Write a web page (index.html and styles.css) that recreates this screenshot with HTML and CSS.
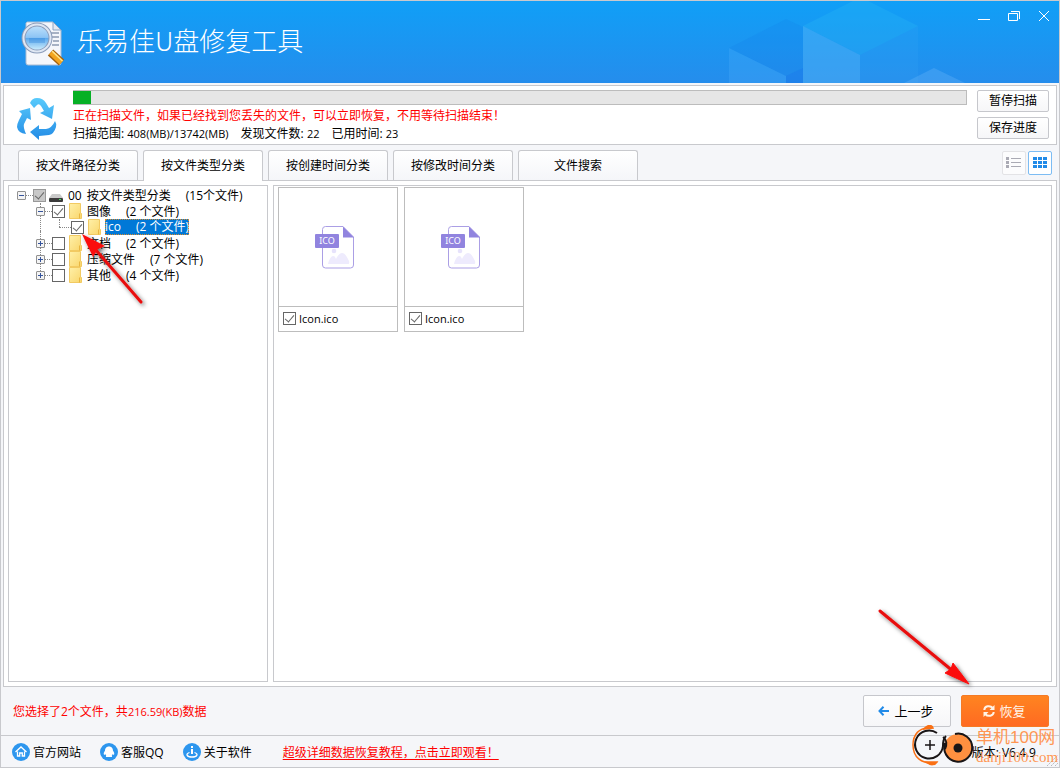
FILE: index.html
```
<!DOCTYPE html>
<html lang="zh-CN">
<head>
<meta charset="utf-8">
<title>乐易佳U盘修复工具</title>
<link rel="stylesheet" href="styles.css">
</head>
<body>
<svg class="defs" width="0" height="0" aria-hidden="true">
  <defs>
    <linearGradient id="folderFill" x1="0" y1="0" x2="1" y2="1"><stop offset="0" stop-color="#fff0a8"/><stop offset="1" stop-color="#f9d66c"/></linearGradient>
    <linearGradient id="blueFill" gradientUnits="userSpaceOnUse" x1="0" y1="0" x2="0" y2="42"><stop offset="0" stop-color="#5accfc"/><stop offset="1" stop-color="#248de6"/></linearGradient>
    <filter id="soft" x="-30%" y="-30%" width="160%" height="160%"><feDropShadow dx="2" dy="2" stdDeviation="2" flood-color="#000" flood-opacity=".55"/></filter>
  </defs>
  <symbol id="folder" viewBox="0 0 13 16"><path d="M.5.5h11v10h1v5H.5z" fill="url(#folderFill)" stroke="#f2ca62"/><path d="M10.500 10.500v5" stroke="#e9b640"/></symbol>
  <symbol id="ico-file" viewBox="0 0 40 43">
    <path d="M10.500.5H28L38.500 11v28a3 3 0 0 1-3 3h-25a3 3 0 0 1-3-3V3.500a3 3 0 0 1 3-3z" fill="#fff" stroke="#ab9fe5"/>
    <path d="M28 .5 39 11.500H28z" fill="#9184df"/>
    <circle cx="19" cy="25" r="2.300" fill="#e6e2fb"/>
    <path d="M13 38c1-4 3-8 5-8s2 1 3 3c2-4 4-6 6-6 3 0 5 4 7 8 .6 2 0 3-1 3z" fill="#eeebfd"/>
    <rect x="0" y="8" width="24" height="14" rx="1" fill="#9184df"/>
  </symbol>
</svg>
<div class="window">
  <header class="titlebar">
    <svg class="cubes" width="260" height="82" viewBox="0 0 260 82" aria-hidden="true">
      <path d="M0 47 57 18l17 8v41l-17 8z" fill="#1478e8" opacity=".16"/>
      <path d="M0 47l57 28v7H0z" fill="#4fb0fa" opacity=".28"/>
      <path d="M57 75l17-8v15H57z" fill="#1670e8" opacity=".4"/>
      <path d="M74 25 124 0h15l50 25-58 29z" fill="#2cbcf3" opacity=".28"/>
      <path d="M74 25l57 29v28H74z" fill="#5cbaf7" opacity=".4"/>
      <path d="M131 54l58-29v57h-58z" fill="#38a4f5" opacity=".2"/>
      <path d="M175 82l30-15 31 15z" fill="#6cb8f8" opacity=".32"/>
    </svg>
    <svg class="logo" width="46" height="46" viewBox="0 0 46 46" aria-hidden="true">
      <defs>
        <linearGradient id="lens" x1="0" y1="0" x2="0" y2="1"><stop offset="0" stop-color="#c5e4fb"/><stop offset=".48" stop-color="#8cc4f5"/><stop offset=".5" stop-color="#5aa8ec"/><stop offset="1" stop-color="#dcf6ff"/></linearGradient>
      </defs>
      <path d="M6 1h26l8 8v33a2 2 0 0 1-2 2H7a2 2 0 0 1-2-2V2z" fill="#f4f6fb" stroke="#a9bbd2"/>
      <path d="M32 1v8h8z" fill="#e3e9f2" stroke="#8da5c4"/>
      <path d="M29 12h9M31 16h7M32 20h6M31 24h7" stroke="#8c9bb2" stroke-width="1.500"/>
      <circle cx="16" cy="17" r="13.500" fill="url(#lens)" stroke="#8b9cba" stroke-width="4"/>
      <circle cx="16" cy="17" r="13.500" fill="none" stroke="#dfe7f3" stroke-width="2"/>
      <path d="M8 17h16v5H8z" fill="#287fd6" opacity=".3"/>
      <path d="M29.500 31.500l11 10" stroke="#a3600c" stroke-width="8"/>
      <path d="M30 31.500l10.500 10" stroke="#f3a51f" stroke-width="5.500"/>
      <path d="M31 30l10.500 10" stroke="#ffe58a" stroke-width="1.500"/>
    </svg>
    <h1 class="title">乐易佳U盘修复工具</h1>
    <div class="controls">
      <button class="control" type="button" aria-label="最小化"><svg width="14" height="14" viewBox="0 0 14 14"><path d="M1 10.500h12" stroke="#fff"/></svg></button>
      <button class="control" type="button" aria-label="还原"><svg width="14" height="14" viewBox="0 0 14 14" fill="none" stroke="#fff"><path d="M1.500 4.500h9v7h-9z"/><path d="M4 2.500h8.500V10"/></svg></button>
      <button class="control" type="button" aria-label="关闭"><svg width="14" height="14" viewBox="0 0 14 14"><path d="M2 2l10 10M12 2 2 12" stroke="#fff"/></svg></button>
    </div>
  </header>

  <section class="scan">
    <svg class="recycle" width="40" height="44" viewBox="0 0 40 44" fill="url(#blueFill)" aria-hidden="true">
      <path d="M13 6Q15 1 20 1q6 0 9 5l3 5 5-3-2 14-12-6 4-2-3-5q-2-3-4-1l-3 3z"/>
      <path d="M2 14l11-3 1 12-4-2-3 6q-1 3 2 10-8-1-9-7 0-3 2-7l3-6z"/>
      <path d="M13 35l9-7v4h7q6-1 9-8 2 3 1 6-2 7-7 8l-10 1v4z"/>
    </svg>
    <div class="scan-info">
      <div class="progress" role="progressbar" aria-label="扫描进度" aria-valuenow="2" aria-valuemin="0" aria-valuemax="100"><div class="progress-fill" style="width:2%"></div></div>
      <p class="alert">正在扫描文件，如果已经找到您丢失的文件，可以立即恢复，不用等待扫描结束！</p>
      <p class="stats"><span>扫描范围: <small>408(MB)/13742(MB)</small></span><span>发现文件数: <small>22</small></span><span>已用时间: <small>23</small></span></p>
    </div>
    <div class="scan-actions">
      <button class="button" type="button">暂停扫描</button>
      <button class="button" type="button">保存进度</button>
    </div>
  </section>

  <nav class="toolbar">
    <div class="tabs">
      <button class="tab" type="button">按文件路径分类</button>
      <button class="tab active" type="button">按文件类型分类</button>
      <button class="tab" type="button">按创建时间分类</button>
      <button class="tab" type="button">按修改时间分类</button>
      <button class="tab" type="button">文件搜索</button>
    </div>
    <div class="views">
      <button class="view" type="button" aria-label="列表"><svg width="16" height="12" viewBox="0 0 16 12" fill="#aaaab4"><path d="M0 0h3v3H0zM0 4h3v3H0zM0 8h3v3H0zM5 1h10v1H5zM5 5h10v1H5zM5 9h10v1H5z"/></svg></button>
      <button class="view selected" type="button" aria-label="缩略图"><svg width="14" height="12" viewBox="0 0 14 12" fill="#218be8"><path d="M0 0h4v3H0zM5 0h4v3H5zM10 0h4v3h-4zM0 4h4v3H0zM5 4h4v3H5zM10 4h4v3h-4zM0 8h4v3H0zM5 8h4v3H5zM10 8h4v3h-4z"/></svg></button>
    </div>
  </nav>

  <main class="main">
    <section class="tree-box">
      <ul class="tree">
        <li class="node">
          <div class="row"><button class="expander open" type="button" aria-label="折叠"></button><span class="dots"></span><input class="check mixed" type="checkbox" id="n0" checked>
            <svg class="drive" width="14" height="8" viewBox="0 0 14 8"><path d="M3 0h8l3 4H0z" fill="#c9c9c9"/><rect y="4" width="14" height="4" rx="1" fill="#3b3b3b"/><path d="M10 5h2v1h-2z" fill="#45e063"/></svg>
            <label class="label root" for="n0"><span>00</span><span class="name">按文件类型分类</span><span>(15个文件)</span></label></div>
          <ul class="branch">
            <li class="node">
              <div class="row"><button class="expander open" type="button" aria-label="折叠"></button><span class="dots"></span><input class="check" type="checkbox" id="n1" checked><svg class="folder" width="13" height="16"><use href="#folder"/></svg><label class="label" for="n1"><span>图像</span><span>(2 个文件)</span></label></div>
              <ul class="leafs">
                <li class="node"><div class="row"><span class="dots long"></span><input class="check" type="checkbox" id="n2" checked><svg class="folder" width="13" height="16"><use href="#folder"/></svg><label class="label current" for="n2"><span>ico</span><span>(2 个文件)</span></label></div></li>
              </ul>
            </li>
            <li class="node"><div class="row"><button class="expander" type="button" aria-label="展开"></button><span class="dots"></span><input class="check" type="checkbox" id="n3"><svg class="folder" width="13" height="16"><use href="#folder"/></svg><label class="label" for="n3"><span>文档</span><span>(2 个文件)</span></label></div></li>
            <li class="node"><div class="row"><button class="expander" type="button" aria-label="展开"></button><span class="dots"></span><input class="check" type="checkbox" id="n4"><svg class="folder" width="13" height="16"><use href="#folder"/></svg><label class="label" for="n4"><span>压缩文件</span><span>(7 个文件)</span></label></div></li>
            <li class="node"><div class="row"><button class="expander" type="button" aria-label="展开"></button><span class="dots"></span><input class="check" type="checkbox" id="n5"><svg class="folder" width="13" height="16"><use href="#folder"/></svg><label class="label" for="n5"><span>其他</span><span>(4 个文件)</span></label></div></li>
          </ul>
        </li>
      </ul>
    </section>
    <section class="files">
      <article class="card">
        <div class="thumb"><svg width="40" height="43" viewBox="0 0 40 43"><use href="#ico-file"/><text class="badge-text" x="12" y="18" text-anchor="middle">ICO</text></svg></div>
        <label class="caption"><input class="check" type="checkbox" checked>Icon.ico</label>
      </article>
      <article class="card">
        <div class="thumb"><svg width="40" height="43" viewBox="0 0 40 43"><use href="#ico-file"/><text class="badge-text" x="12" y="18" text-anchor="middle">ICO</text></svg></div>
        <label class="caption"><input class="check" type="checkbox" checked>Icon.ico</label>
      </article>
    </section>
  </main>

  <section class="actions">
    <p class="summary">您选择了2个文件，共<span class="size">216.59(KB)</span>数据</p>
    <button class="button big" type="button"><svg width="11" height="10" viewBox="0 0 11 10" fill="none" stroke="#218be8" stroke-width="2"><path d="M5.500.8 1.500 5l4 4.200M2 5h9"/></svg>上一步</button>
    <button class="button big primary" type="button"><svg width="14" height="14" viewBox="0 0 14 14" fill="none" stroke="#fff3e6" stroke-width="2"><path d="M2.300 6C2.500 2 8 .8 10.800 4M11.700 8C11.500 12 6 13.200 3.200 10"/><path d="M12.500 1v5h-5zM1.500 13V8h5z" fill="#fff3e6" stroke="none"/></svg>恢复</button>
  </section>

  <footer class="footer">
    <a class="link" href="#"><svg width="18" height="18" viewBox="0 0 18 18"><circle cx="9" cy="9" r="9" fill="#2d96ee"/><path d="M3.500 9 9 4l5.500 5M5.500 8.500V13h2.200v-3h2.600v3h2.200V8.500" fill="none" stroke="#fff" stroke-width="1.300"/></svg>官方网站</a>
    <a class="link" href="#"><svg width="18" height="18" viewBox="0 0 18 18"><circle cx="9" cy="9" r="9" fill="#2d96ee"/><path d="M9 3.500c3 0 4 2.300 4 4.300 1 1.300 1.700 2.800 1 4-.5.300-1-.3-1.300-.7-.2.700-.6 1.200-1 1.600.6.400.6 1.300-.5 1.300H6.800c-1.100 0-1.100-.9-.5-1.300-.4-.4-.8-.9-1-1.600-.3.400-.8 1-1.300.7-.7-1.200 0-2.700 1-4 0-2 1-4.300 4-4.300z" fill="#fff"/></svg>客服QQ</a>
    <a class="link" href="#"><svg width="18" height="18" viewBox="0 0 18 18"><circle cx="9" cy="9" r="9" fill="#2d96ee"/><path d="M8 3h2v2H8zM8 6h2v5H8z" fill="#fff"/><path d="M6.500 9.500C2 11 4 14 9 14s7-3 2.500-4.500" fill="none" stroke="#fff" stroke-width="1.300"/></svg>关于软件</a>
    <a class="tutorial" href="#">超级详细数据恢复教程，点击立即观看！</a>
    <span class="version">版本: V6.4.9</span>
    <svg class="grip" width="12" height="12" viewBox="0 0 12 12" aria-hidden="true"><path d="M1 12 12 1M5 12l7-7M9 12l3-3" stroke="#b5b7bd" stroke-dasharray="2 1"/></svg>
  </footer>

  <svg class="arrow arrow-check" width="72" height="76" viewBox="0 0 72 76" aria-hidden="true"><g filter="url(#soft)"><path d="M14 16l46 53" stroke="#e80c0c" stroke-width="3" stroke-linecap="round"/><path d="M1 1l23 12-7 3-5 8z" fill="#fb0d0d"/></g></svg>
  <svg class="arrow arrow-restore" width="104" height="88" viewBox="0 0 104 88" aria-hidden="true"><g filter="url(#soft)"><path d="M9 7l74 61" stroke="#e80c0c" stroke-width="3" stroke-linecap="round"/><path d="M98 80L82 59l-2 6-6 4z" fill="#fb0d0d" stroke="#fb0d0d"/></g></svg>
  <div class="watermark" aria-hidden="true">
    <svg width="64" height="42" viewBox="0 0 64 42">
      <path d="M18 3C7 2 1 10 1 20c0 12 8 19 22 18" fill="none" stroke="#fa7014" stroke-width="1.500"/>
      <path d="M12 4c4-5 8-4 9-1zM14 37c5 4 9 3 11 0z" fill="#fa7014" stroke="#fa7014" stroke-width="1.500"/>
      <path d="M25 8A14 14 0 1 0 31 21c0-5 1-8 3-10" fill="none" stroke="#191516" stroke-width="2"/>
      <path d="M18 15v10M13 20h10" stroke="#191516" stroke-width="1.500"/>
      <circle cx="46" cy="23" r="14" fill="#ff9040"/>
      <path d="M43 9a14 14 0 1 1-10 9M31 12c4 3 4 8 2 12" fill="none" stroke="#191516" stroke-width="2"/>
      <circle cx="46" cy="23" r="4.500" fill="#191516"/>
    </svg>
    <div class="watermark-text"><span>单机100网</span><span class="domain">danji100.com</span></div>
  </div>
</div>
</body>
</html>
```
FILE: styles.css
```
* { box-sizing: border-box; }
body, h1, p, ul { margin: 0; padding: 0; }
ul { list-style: none; }
body, button, input {
  font-family: "Open Sans", "Noto Sans CJK SC", sans-serif;
  font-size: 12px;
  color: #000;
}
button { cursor: pointer; }
svg { flex: none; }
.defs { position: absolute; }

.window {
  position: relative;
  display: flex;
  flex-direction: column;
  min-height: 100vh;
  border: 1px solid #c8c9cd;
  background: #f5f6f9;
  overflow: hidden;
}

.titlebar {
  position: relative;
  display: flex;
  align-items: center;
  height: 82px;
  padding-left: 20px;
  background: linear-gradient(#109ff7, #258dec);
}
.logo { margin-top: 4px; }
.cubes { position: absolute; right: 70px; top: 0; }
.title {
  margin-left: 10px;
  padding-bottom: 4px;
  font-family: "Noto Sans CJK SC", sans-serif;
  font-size: 26px;
  line-height: 32px;
  font-weight: 300;
  color: #fff;
}
.controls {
  position: relative;
  display: flex;
  align-self: flex-start;
  gap: 16px;
  margin: 8px 8px 0 auto;
}
.control {
  width: 14px;
  height: 14px;
  padding: 0;
  border: 0;
  background: none;
}
.control svg { display: block; }

.scan {
  display: flex;
  margin: 2px 2px 0;
  height: 60px;
  padding: 4px 7px 0 13px;
  border: 1px solid #c8c9cd;
  background: #fff;
}
.recycle { margin: 7px 16px 0 0; }
.scan-info { flex: 1; min-width: 0; }
.progress {
  height: 15px;
  border: 1px solid #bcbcbc;
  border-left: 0;
  background: #e6e6e6;
}
.progress-fill { height: 13px; background: #06b025; }
.alert, .stats { line-height: 18px; white-space: nowrap; }
.alert { margin-top: 2px; color: #f00; }
.stats { display: flex; gap: 12px; }
.stats small { font-size: 11px; }
.scan-actions {
  display: flex;
  flex-direction: column;
  gap: 5px;
  margin-left: 10px;
}
.button {
  width: 72px;
  height: 22px;
  padding: 0;
  border: 1px solid #c6c7cc;
  border-radius: 2px;
  background: linear-gradient(#fff, #f6f6f8);
  line-height: 18px;
}

.toolbar {
  display: flex;
  justify-content: space-between;
  height: 35px;
  padding: 5px 7px 0 17px;
}
.tabs { display: flex; gap: 5px; }
.tab {
  width: 120px;
  height: 30px;
  padding: 0 0 2px;
  border: 1px solid #c8c9cd;
  border-bottom: 0;
  border-radius: 3px 3px 0 0;
  background: linear-gradient(#fff, #f5f6f9);
}
.tab.active { position: relative; z-index: 1; height: 31px; padding-bottom: 3px; background: #fff; }
.views { display: flex; gap: 2px; padding-top: 1px; }
.view {
  display: grid;
  place-items: center;
  width: 24px;
  height: 24px;
  padding: 0;
  border: 1px solid #e3e3e6;
  border-radius: 2px;
  background: #fcfcfd;
}
.view.selected { border-color: #7cbcf3; background: #fff; }

.main {
  display: flex;
  flex: 1;
  gap: 5px;
  margin: 0 2px;
  padding: 4px;
  border: 1px solid #c8c9cd;
  background: #fff;
}
.tree-box, .files { border: 1px solid #c8c9cd; background: #fff; }
.tree-box { flex: none; width: 260px; padding: 1px 0 0 8px; }
.files {
  display: flex;
  flex: 1;
  align-items: flex-start;
  gap: 6px;
  padding: 1px 4px;
}

.node { position: relative; }
.row { display: flex; align-items: center; height: 16px; }
.branch { padding-left: 19px; }
.leafs { padding-left: 23px; }
.branch > .node::before {
  content: "";
  position: absolute;
  left: 4px;
  top: -4px;
  bottom: 8px;
  border-left: 1px dotted #888;
}
.branch > .node:first-child::before { top: 0; bottom: 0; }
.leafs > .node::before {
  content: "";
  position: absolute;
  left: 0;
  top: 0;
  height: 8px;
  border-left: 1px dotted #888;
}
.expander {
  position: relative;
  width: 9px;
  height: 9px;
  padding: 0;
  border: 1px solid #919191;
  border-radius: 1px;
  background:
    linear-gradient(#35549c, #35549c) center / 5px 1px no-repeat,
    linear-gradient(#35549c, #35549c) center / 1px 5px no-repeat,
    #f4f4f4;
}
.expander.open { background: linear-gradient(#35549c, #35549c) center / 5px 1px no-repeat, #f4f4f4; }
.dots { width: 7px; border-top: 1px dotted #888; }
.dots.long { width: 12px; }
.check {
  flex: none;
  position: relative;
  appearance: none;
  width: 13px;
  height: 13px;
  margin: 0;
  border: 1px solid #666;
  background: #fff;
}
.check:checked::after {
  content: "";
  position: absolute;
  left: 3px;
  top: 0;
  width: 4px;
  height: 8px;
  border: solid #666;
  border-width: 0 1px 1px 0;
  transform: rotate(40deg);
}
.check.mixed { border-color: #999; background: #c8c8c8; }
.drive { margin-left: 3px; margin-top: 5px; }
.folder { margin-left: 4px; }
.label {
  display: flex;
  gap: 15px;
  margin-left: 4px;
  padding: 0 1px;
  line-height: 17px;
  white-space: nowrap;
}
.label.root { gap: 5px; }
.name { margin-right: 10px; }
.label.current {
  padding: 0;
  line-height: 16px;
  background: #0078d7;
  outline: 1px dotted #d98a2b;
  outline-offset: -1px;
  color: #fff;
}

.card { width: 120px; border: 1px solid #bdbdbd; background: #fff; }
.thumb { display: grid; place-items: center; height: 118px; padding-right: 6px; }
.badge-text { font-family: "Noto Sans", sans-serif; font-size: 9px; fill: #fff; }
.caption {
  display: flex;
  align-items: center;
  gap: 3px;
  height: 25px;
  padding: 0 0 1px 4px;
  border-top: 1px solid #bdbdbd;
  font-size: 11px;
}

.actions {
  display: flex;
  align-items: center;
  gap: 10px;
  height: 48px;
  padding: 0 10px 0 12px;
}
.summary { margin-right: auto; color: #f00; white-space: nowrap; }
.size { font-size: 11px; }
.button.big {
  display: flex;
  align-items: center;
  justify-content: center;
  gap: 5px;
  width: 88px;
  height: 32px;
  padding-right: 2px;
  font-size: 13px;
}
.button.primary {
  gap: 3px;
  border-color: #f57a25;
  background: linear-gradient(#ff8420, #ff6a22);
  color: #fff3e6;
}

.footer {
  display: flex;
  align-items: center;
  height: 32px;
  padding-left: 11px;
  border-top: 1px solid #c8c9cd;
}
.link {
  display: flex;
  align-items: center;
  gap: 3px;
  margin-right: 19px;
  color: #000;
  text-decoration: none;
}
.tutorial { margin-left: 12px; color: #f00; text-underline-offset: 2px; }
.version { margin-left: auto; }
.grip { align-self: flex-end; margin: 0 1px 1px 10px; }

.arrow { position: absolute; pointer-events: none; }
.arrow-check { left: 80px; top: 232px; }
.arrow-restore { right: 84px; bottom: 75px; }
.watermark {
  position: absolute;
  right: 0;
  bottom: 0;
  display: flex;
  pointer-events: none;
}
.watermark-text {
  display: flex;
  flex-direction: column;
  width: 83px;
  padding-top: 2px;
  font-family: "Liberation Sans", "Noto Sans CJK SC", sans-serif;
  font-size: 17px;
  line-height: 22px;
  color: #ff9654;
  white-space: nowrap;
}
.domain { font-family: "Liberation Serif", serif; font-size: 15px; line-height: 16px; }
```
